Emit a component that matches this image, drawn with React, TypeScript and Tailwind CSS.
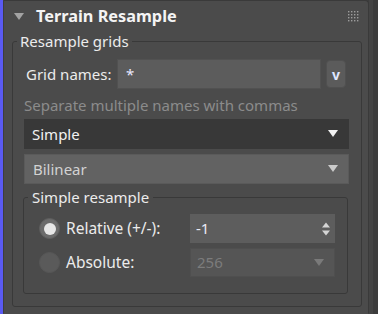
import React from 'react';

const font = { fontFamily: '"Noto Sans", "Open Sans", Arial, sans-serif' };

function Caret({ color }: { color: string }) {
  return (
    <svg width="10" height="8" viewBox="0 0 10 8">
      <path d="M0 0 H10 L5 7 Z" fill={color} />
    </svg>
  );
}

function Grip() {
  const dots = [];
  for (let r = 0; r < 4; r++) {
    for (let c = 0; c < 4; c++) {
      dots.push(<rect key={`${r}-${c}`} x={c * 3} y={r * 3} width="1.4" height="1.4" fill="#9c9c9c" />);
    }
  }
  return (
    <svg width="11" height="11" viewBox="0 0 11 11">
      {dots}
    </svg>
  );
}

function Radio({ checked, disabled }: { checked?: boolean; disabled?: boolean }) {
  return (
    <div
      className={`flex h-[21px] w-[21px] items-center justify-center rounded-full border ${
        disabled ? 'border-[#575757] bg-[#5a5a5a]' : 'border-[#5e5e5e] bg-[#6b6b6b]'
      }`}
    >
      {checked && <div className="h-[12px] w-[12px] rounded-full bg-[#e6e6e6]" />}
    </div>
  );
}

export default function App() {
  return (
    <div className="flex h-[314px] w-[378px] overflow-hidden bg-[#3d3d3d]" style={font}>
      <div className="w-[3px] bg-[#5a5af2]" />
      <div className="flex w-[366px] flex-col rounded-tr-[4px] border border-l-[#3e3e3e] border-r-[#3a3a3a] border-t-[#3a3a3a] border-b-transparent bg-[#4b4b4b]">
        <div className="flex h-[31px] items-center pl-[10px] pr-[9px]">
          <Caret color="#a3a3a3" />
          <span className="ml-[12px] text-[16.3px] font-bold leading-none text-[#f4f4f4]">Terrain Resample</span>
          <div className="ml-auto">
            <Grip />
          </div>
        </div>

        <fieldset className="ml-[8px] w-[350px] rounded-[3px] border border-[#393939] px-[11px] pb-[12px]">
          <legend className="-ml-[7px] px-[3px] text-[15px] leading-[18px] text-[#ececec]">Resample grids</legend>

          <div className="mt-[9px] flex h-[30px] items-center">
            <span className="w-[93px] pl-[2px] text-[15px] text-[#ececec]">Grid names:</span>
            <div className="flex h-[30px] w-[204px] items-center border border-[#515151] bg-[#5c5c5c] pl-[8px] text-[15px] text-[#e8e8ff]">
              *
            </div>
            <div className="ml-[5px] flex h-[28px] w-[20px] items-center justify-center rounded-[4px] border border-[#505050] bg-[#5b5b5b] text-[14px] font-bold text-[#dfe6ff]">
              v
            </div>
          </div>

          <div className="mt-[7px] text-[15px] leading-[18px] text-[#8b8b8b]">Separate multiple names with commas</div>

          <div className="mt-[5px] flex h-[30px] w-[325px] items-center justify-between bg-[#383838] pl-[8px] pr-[11px] text-[15px] text-[#f2f2f2]">
            <span>Simple</span>
            <Caret color="#f2f2f2" />
          </div>

          <div className="mt-[5px] flex h-[30px] w-[325px] items-center justify-between border border-[#5a5a5a] bg-[#626262] pl-[8px] pr-[10px] text-[15px] text-[#d2d2d2]">
            <span>Bilinear</span>
            <Caret color="#cbcbcb" />
          </div>

          <fieldset className="-ml-px mt-[4px] w-[325px] rounded-[3px] border border-[#393939] pb-[16px] pl-[15px] pr-[12px]">
            <legend className="-ml-[11px] px-[4px] text-[15px] leading-[18px] text-[#ececec]">Simple resample</legend>

            <div className="mt-[8px] flex h-[29px] items-center">
              <Radio checked />
              <span className="ml-[6px] w-[124px] text-[15.5px] text-[#ececec]">Relative (+/-):</span>
              <div className="flex h-[29px] flex-1 items-center justify-between bg-[#5d5d5d] pl-[6px] pr-[5px] text-[15px] text-[#eaeaf4]">
                <span>-1</span>
                <svg width="8" height="14" viewBox="0 0 8 14">
                  <path d="M0 5.5 L4 0.5 L8 5.5 Z M0 8.5 H8 L4 13.5 Z" fill="#d4d4d4" />
                </svg>
              </div>
            </div>

            <div className="mt-[5px] flex h-[29px] items-center">
              <Radio disabled />
              <span className="ml-[6px] w-[124px] text-[15.5px] text-[#ececec]">Absolute:</span>
              <div className="flex h-[29px] flex-1 items-center justify-between border border-[#4f4f4f] bg-[#555555] pl-[6px] pr-[10px] text-[15px] text-[#7c7c7c]">
                <span>256</span>
                <Caret color="#7a7a7a" />
              </div>
            </div>
          </fieldset>
        </fieldset>
      </div>
      <div className="w-[4px] bg-[#444444]" />
      <div className="flex-1 bg-[#3c3c3c]" />
    </div>
  );
}
